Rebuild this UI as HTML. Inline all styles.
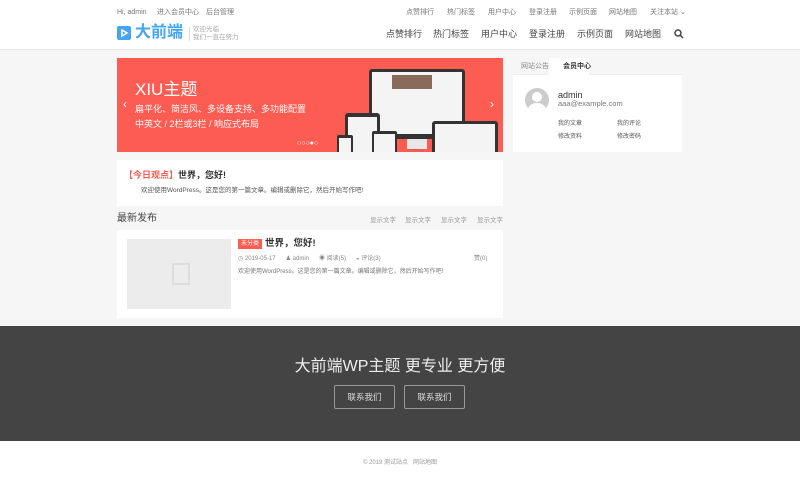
<!DOCTYPE html>
<html><head><meta charset="utf-8"><style>
*{margin:0;padding:0;box-sizing:border-box}
body{width:800px;height:490px;background:#f6f6f6;font-family:"Liberation Sans","Noto Sans CJK SC",sans-serif;position:relative;overflow:hidden;color:#333}
.a{position:absolute;white-space:nowrap;line-height:1.4}
.hdr{position:absolute;left:0;top:0;width:800px;height:50px;background:#fff;border-bottom:1px solid #e6e6e6}
.s{font-size:7px;color:#777}
.nav{font-size:9px;color:#444}
.box{position:absolute;background:#fff}
</style></head><body>
<div class="hdr"></div>
<div class="a s" style="left:117px;top:8px">Hi, admin</div>
<div class="a s" style="left:157px;top:8px">进入会员中心</div>
<div class="a s" style="left:206px;top:8px">后台管理</div>
<div class="a s" style="left:406px;top:8px">点赞排行</div>
<div class="a s" style="left:447px;top:8px">热门标签</div>
<div class="a s" style="left:488px;top:8px">用户中心</div>
<div class="a s" style="left:529px;top:8px">登录注册</div>
<div class="a s" style="left:569px;top:8px">示例页面</div>
<div class="a s" style="left:609px;top:8px">网站地图</div>
<div class="a s" style="left:650px;top:8px">关注本站 ⌄</div>
<div class="a" style="left:117px;top:26px;width:14px;height:14px;background:#45a5f0;border-radius:2px"></div>
<svg class="a" style="left:117px;top:26px" width="14" height="14"><path d="M5 4 L10 7 L5 10 Z" fill="none" stroke="#fff" stroke-width="1.6"/></svg>
<div class="a" style="left:135px;top:22px;font-size:16px;color:#45a5f0;font-weight:bold">大前端</div>
<div class="a" style="left:189px;top:27px;width:1px;height:14px;background:#ddd"></div>
<div class="a" style="left:193px;top:26px;font-size:6.5px;color:#aaa;line-height:8px">欢迎光临<br>我们一直在努力</div>
<div class="a nav" style="left:386px;top:28px">点赞排行</div>
<div class="a nav" style="left:433px;top:28px">热门标签</div>
<div class="a nav" style="left:481px;top:28px">用户中心</div>
<div class="a nav" style="left:529px;top:28px">登录注册</div>
<div class="a nav" style="left:577px;top:28px">示例页面</div>
<div class="a nav" style="left:625px;top:28px">网站地图</div>
<svg class="a" style="left:674px;top:29px" width="10" height="10"><circle cx="4" cy="4" r="3" fill="none" stroke="#444" stroke-width="1.5"/><path d="M6 6L9 9" stroke="#444" stroke-width="1.5"/></svg>

<div class="box" style="left:117px;top:58px;width:386px;height:94px;background:#fd5c52;overflow:hidden">
 <div class="a" style="left:18px;top:20px;font-size:17px;color:#fff">XIU主题</div>
 <div class="a" style="left:18px;top:45px;font-size:9px;color:#fff">扁平化、简洁风、多设备支持、多功能配置</div>
 <div class="a" style="left:18px;top:60px;font-size:9px;color:#fff">中英文 / 2栏或3栏 / 响应式布局</div>
 <div class="a" style="left:6px;top:38px;color:#fff;font-size:12px">‹</div>
 <div class="a" style="left:373px;top:38px;color:#fff;font-size:12px">›</div>
 <div class="a" style="left:252px;top:11px;width:96px;height:70px;background:#333;border-radius:3px"></div>
 <div class="a" style="left:255px;top:14px;width:90px;height:62px;background:#f4f4f4"></div>
 <div class="a" style="left:275px;top:17px;width:40px;height:14px;background:#8a6a5a"></div>
 <div class="a" style="left:290px;top:81px;width:20px;height:10px;background:#e8e8e8"></div>
 <div class="a" style="left:228px;top:55px;width:35px;height:42px;background:#333;border-radius:3px"></div>
 <div class="a" style="left:231px;top:59px;width:29px;height:36px;background:#f4f4f4"></div>
 <div class="a" style="left:220px;top:77px;width:16px;height:19px;background:#333;border-radius:2px"></div>
 <div class="a" style="left:222px;top:80px;width:12px;height:14px;background:#f4f4f4"></div>
 <div class="a" style="left:255px;top:73px;width:25px;height:23px;background:#333;border-radius:2px"></div>
 <div class="a" style="left:257px;top:76px;width:21px;height:20px;background:#f4f4f4"></div>
 <div class="a" style="left:315px;top:63px;width:66px;height:34px;background:#333;border-radius:3px"></div>
 <div class="a" style="left:318px;top:66px;width:60px;height:30px;background:#f4f4f4"></div>
 <div class="a" style="left:180px;top:81px;font-size:7px;color:#fff">○○○●○</div>
</div>

<div class="box" style="left:513px;top:58px;width:169px;height:94px">
 <div class="a" style="left:0;top:0;width:169px;height:17px;background:#f6f6f6;border-bottom:1px solid #eee"></div>
 <div class="a" style="left:36px;top:0;width:40px;height:18px;background:#fff"></div>
 <div class="a" style="left:8px;top:4px;font-size:7px;color:#888">网站公告</div>
 <div class="a" style="left:50px;top:4px;font-size:7px;color:#333;font-weight:bold">会员中心</div>
 <div class="a" style="left:12px;top:30px;width:24px;height:24px;border-radius:50%;background:#ccc;overflow:hidden"><div class="a" style="left:7px;top:4px;width:10px;height:10px;border-radius:50%;background:#fff"></div><div class="a" style="left:3px;top:15px;width:18px;height:14px;border-radius:50%;background:#fff"></div></div>
 <div class="a" style="left:45px;top:31px;font-size:9px;color:#333">admin</div>
 <div class="a" style="left:45px;top:41px;font-size:7.5px;color:#777">aaa@example.com</div>
 <div class="a" style="left:45px;top:62px;font-size:6px;color:#555">我的文章</div>
 <div class="a" style="left:104px;top:62px;font-size:6px;color:#555">我的评论</div>
 <div class="a" style="left:45px;top:75px;font-size:6px;color:#555">修改资料</div>
 <div class="a" style="left:104px;top:75px;font-size:6px;color:#555">修改密码</div>
</div>

<div class="box" style="left:117px;top:160px;width:386px;height:46px">
 <div class="a" style="left:7px;top:9px;font-size:9px;color:#fd5c52;font-weight:bold">【今日观点】<span style="color:#333">世界，您好!</span></div>
 <div class="a" style="left:24px;top:26px;font-size:6.5px;color:#555">欢迎使用WordPress。这是您的第一篇文章。编辑或删除它，然后开始写作吧!</div>
</div>
<div class="a" style="left:117px;top:212px;font-size:10px;color:#444">最新发布</div>
<div class="a" style="left:370px;top:216px;font-size:6.5px;color:#999">显示文字</div>
<div class="a" style="left:405px;top:216px;font-size:6.5px;color:#999">显示文字</div>
<div class="a" style="left:441px;top:216px;font-size:6.5px;color:#999">显示文字</div>
<div class="a" style="left:477px;top:216px;font-size:6.5px;color:#999">显示文字</div>
<div class="box" style="left:117px;top:230px;width:386px;height:88px">
 <div class="a" style="left:10px;top:9px;width:104px;height:70px;background:#ececec"></div>
 <div class="a" style="left:55px;top:33px;width:18px;height:22px;border:2px solid #ddd"></div>
 <div class="a" style="left:121px;top:9px;font-size:6px;color:#fff;background:#fd5c52;padding:0 3px;line-height:10px">未分类</div>
 <div class="a" style="left:148px;top:7px;font-size:9.5px;color:#333;font-weight:bold">世界，您好!</div>
 <div class="a" style="left:121px;top:25px;font-size:6px;color:#888">◷ 2019-05-17 &nbsp;&nbsp;&nbsp;&nbsp; ♟ admin &nbsp;&nbsp;&nbsp;&nbsp; ◉ 阅读(5) &nbsp;&nbsp;&nbsp;&nbsp; ◒ 评论(3)</div>
 <div class="a" style="left:357px;top:25px;font-size:6px;color:#888">赞(0)</div>
 <div class="a" style="left:121px;top:38px;font-size:6px;color:#777">欢迎使用WordPress。这是您的第一篇文章。编辑或删除它，然后开始写作吧!</div>
</div>

<div class="a" style="left:0;top:326px;width:800px;height:115px;background:#444"></div>
<div class="a" style="left:0;top:356px;width:800px;text-align:center;font-size:16px;color:#eee">大前端WP主题 更专业 更方便</div>
<div class="a" style="left:334px;top:385px;width:61px;height:24px;border:1px solid #999;border-radius:2px;color:#ddd;font-size:8.5px;text-align:center;line-height:22px">联系我们</div>
<div class="a" style="left:404px;top:385px;width:61px;height:24px;border:1px solid #999;border-radius:2px;color:#ddd;font-size:8.5px;text-align:center;line-height:22px">联系我们</div>
<div class="a" style="left:0;top:441px;width:800px;height:49px;background:#fff"></div>
<div class="a" style="left:0;top:459px;width:800px;text-align:center;font-size:6px;color:#999">© 2019 测试站点 &nbsp; 网站地图</div>
</body></html>
